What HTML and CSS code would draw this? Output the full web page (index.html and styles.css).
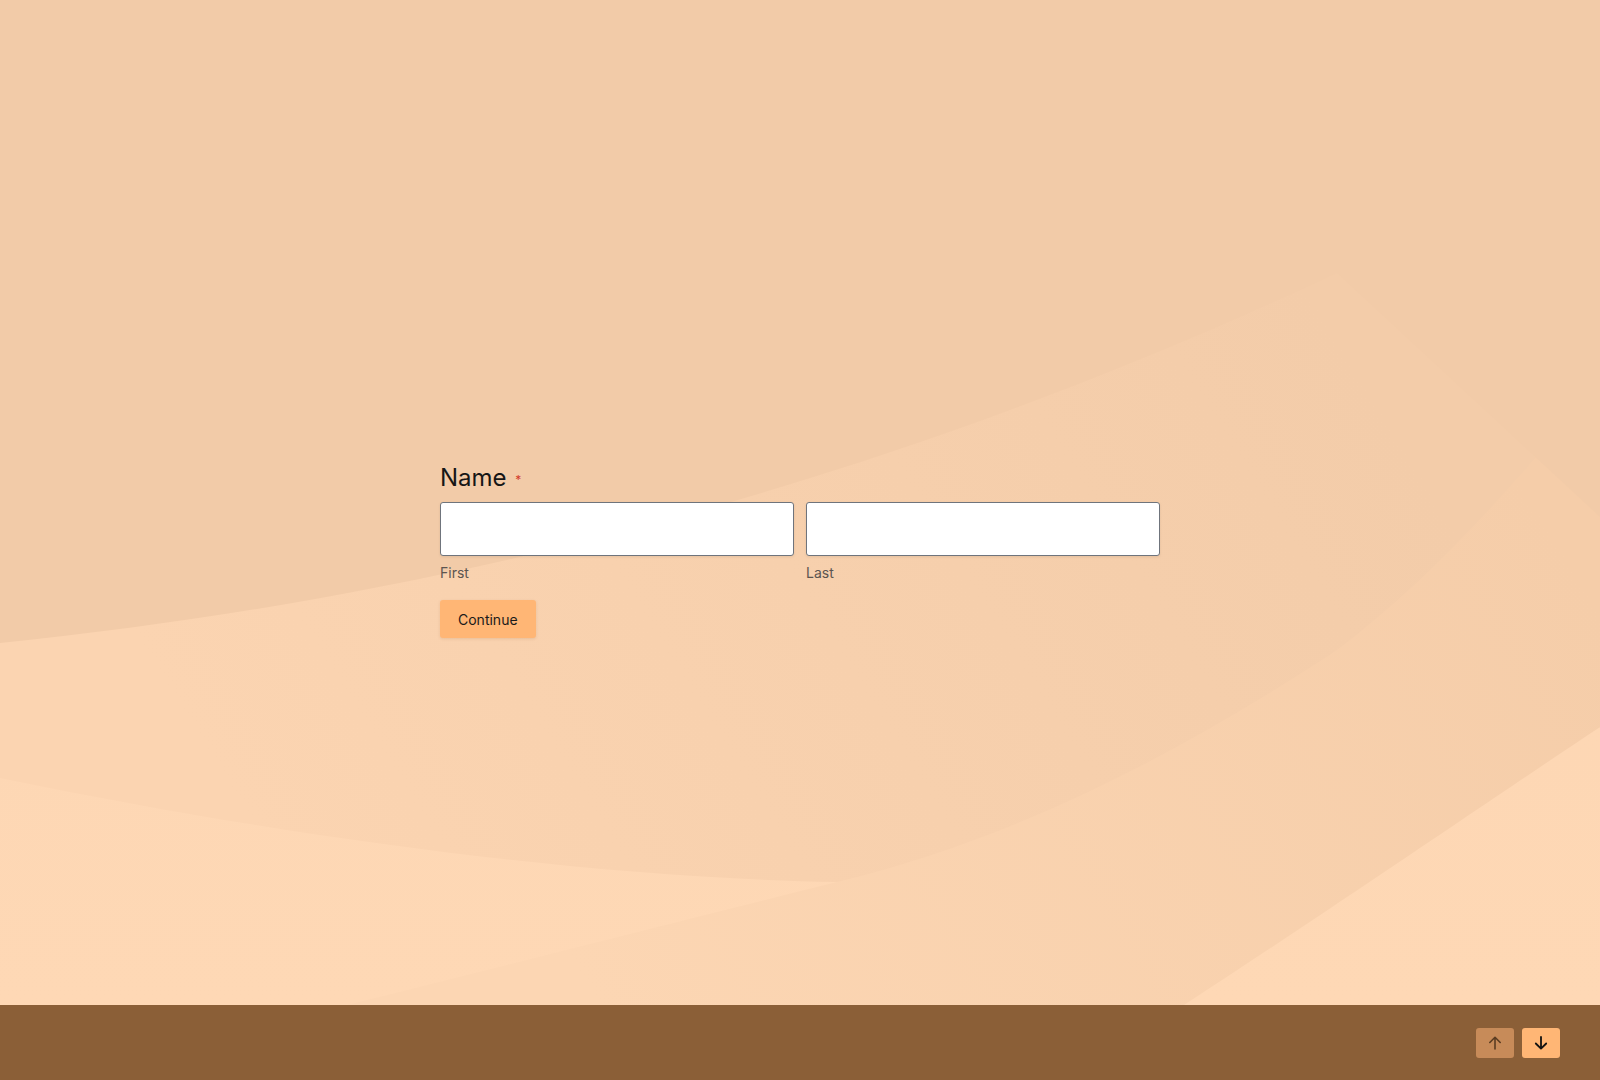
FILE: index.html
```html
<!DOCTYPE html>
<html lang="en">
<head>
<meta charset="utf-8">
<title>Name</title>
<link rel="stylesheet" href="styles.css">
</head>
<body>
<main class="stage">
  <svg class="bg" viewBox="0 0 1600 1005" preserveAspectRatio="none" aria-hidden="true">
    <defs>
      <linearGradient id="gbase" x1="0" y1="0" x2="0" y2="1">
        <stop offset="0" stop-color="#fbd4b1"/>
        <stop offset="1" stop-color="#fed8b5"/>
      </linearGradient>
      <linearGradient id="gA" gradientUnits="userSpaceOnUse" x1="1300" y1="280" x2="300" y2="900">
        <stop offset="0" stop-color="#f3cca9"/>
        <stop offset="1" stop-color="#fbd4b1"/>
      </linearGradient>
      <linearGradient id="gB" gradientUnits="userSpaceOnUse" x1="1500" y1="450" x2="600" y2="1005">
        <stop offset="0" stop-color="#f5cda9"/>
        <stop offset="1" stop-color="#fcd6b3"/>
      </linearGradient>
    </defs>
    <rect x="0" y="0" width="1600" height="1005" fill="url(#gbase)"/>
    <path d="M0,0 L1600,0 L1600,727 C1420,830 1300,875 1100,882 C1000,884 900,884 837,882 C600,878 300,840 0,778 Z" fill="url(#gA)"/>
    <path d="M1600,380 C1520,480 1430,580 1337,650 C1170,760 1010,840 837,882 C700,916 560,952 347,1005 L1184,1005 C1360,890 1490,800 1600,727 Z" fill="url(#gB)"/>
    <path d="M0,0 L1600,0 L1600,517 L1337,273 C960,450 520,590 0,643 Z" fill="#f2cba8"/>
  </svg>

  <form class="form">
    <div class="question">Name <span class="req">*</span></div>
    <div class="fields">
      <div class="field">
        <input class="input" type="text" aria-label="First">
        <div class="sublabel">First</div>
      </div>
      <div class="field">
        <input class="input" type="text" aria-label="Last">
        <div class="sublabel">Last</div>
      </div>
    </div>
    <button class="continue" type="button">Continue</button>
  </form>
</main>
<footer class="footer">
  <div class="nav">
    <button class="navbtn up" type="button" aria-label="Previous">
      <svg width="16" height="16" viewBox="0 0 16 16" fill="none"><path d="M8 14V2.5M2.8 7.5L8 2.3l5.2 5.2" stroke="#5a3c22" stroke-width="1.6" stroke-linecap="round" stroke-linejoin="round"/></svg>
    </button>
    <button class="navbtn down" type="button" aria-label="Next">
      <svg width="16" height="16" viewBox="0 0 16 16" fill="none"><path d="M8 2v11.5M2.8 8.5L8 13.7l5.2-5.2" stroke="#111" stroke-width="1.8" stroke-linecap="round" stroke-linejoin="round"/></svg>
    </button>
  </div>
</footer>
</body>
</html>
```

FILE: styles.css
```css
* { box-sizing: border-box; }
html, body { margin: 0; padding: 0; height: 100%; }
body {
  font-family: Inter, "Noto Sans", "Liberation Sans", sans-serif;
  display: flex;
  flex-direction: column;
  height: 1080px;
  overflow: hidden;
  background: #fed8b5;
}
.stage {
  position: relative;
  flex: 1;
  overflow: hidden;
}
.bg {
  position: absolute;
  left: 0;
  top: 0;
  width: 100%;
  height: 100%;
  display: block;
}
.form {
  position: relative;
  width: 720px;
  margin: 0 auto;
  padding-top: 463px;
}
.question {
  font-size: 24px;
  line-height: 30px;
  color: #161616;
  font-weight: 400;
}
.req {
  color: #d23a2a;
  font-size: 12px;
  vertical-align: 2px;
  margin-left: 2px;
}
.fields {
  display: flex;
  gap: 12px;
  margin-top: 7px;
}
.field { flex: 1; }
.input {
  display: block;
  width: 100%;
  height: 54px;
  background: #fff;
  border: 1px solid #6f747c;
  border-radius: 3px;
  box-shadow: 0 1px 3px rgba(0,0,0,0.08);
  font: inherit;
  padding: 0 12px;
  outline: none;
}
.sublabel {
  margin-top: 7px;
  font-size: 14px;
  line-height: 20px;
  color: #5c5550;
}
.continue {
  margin-top: 17px;
  height: 38px;
  padding: 0 18px;
  background: #ffb675;
  border: none;
  border-radius: 3px;
  box-shadow: 0 1px 3px rgba(140,80,30,0.15);
  font-family: inherit;
  font-size: 14px;
  color: #1a1a1a;
  cursor: pointer;
}
.footer {
  height: 75px;
  background: #8b5f37;
  display: flex;
  align-items: center;
  justify-content: flex-end;
  padding-right: 40px;
}
.nav {
  display: flex;
  gap: 8px;
  margin-top: 1px;
}
.navbtn {
  width: 38px;
  height: 30px;
  border: none;
  border-radius: 3px;
  display: flex;
  align-items: center;
  justify-content: center;
  padding: 0;
  cursor: pointer;
}
.navbtn.up { background: #c78b59; }
.navbtn.down { background: #ffb675; }
```
